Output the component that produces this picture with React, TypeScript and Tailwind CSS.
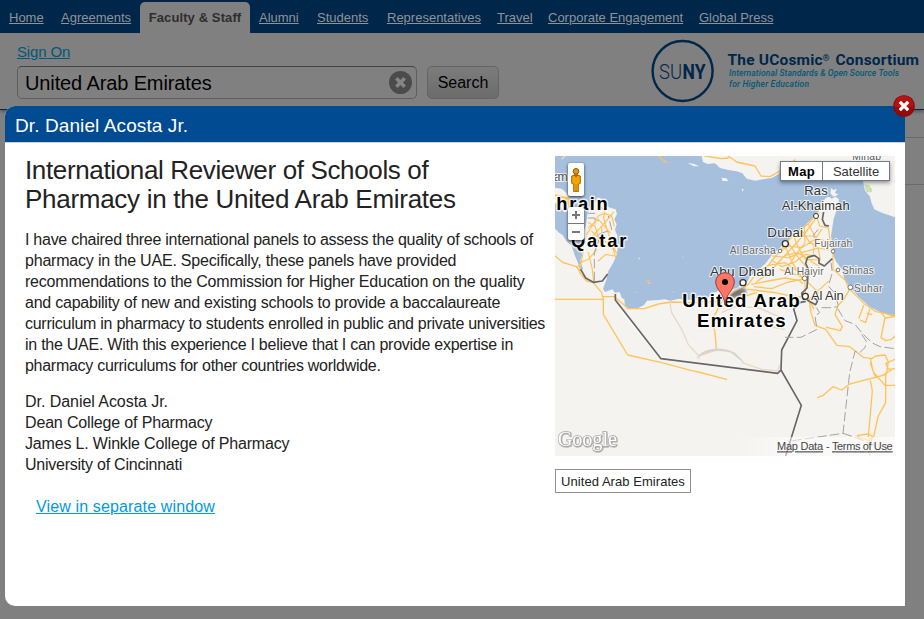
import React from "react";

const nav: [string, string][] = [
  ["Home", "w-[52px]"],
  ["Agreements", "w-[88px]"],
  ["Faculty & Staff", "w-[110px]"],
  ["Alumni", "w-[58px]"],
  ["Students", "w-[70px]"],
  ["Representatives", "w-[110px]"],
  ["Travel", "w-[51px]"],
  ["Corporate Engagement", "w-[151px]"],
  ["Global Press", "w-[93px]"],
];

const story: [string, string][] = [
  ["I have chaired three international panels to assess the quality of schools of", "tracking-[-0.265px]"],
  ["pharmacy in the UAE. Specifically, these panels have provided", "tracking-[-0.2px]"],
  ["recommendations to the Commission for Higher Education on the quality", "tracking-[-0.21px]"],
  ["and capability of new and existing schools to provide a baccalaureate", "tracking-[-0.23px]"],
  ["curriculum in pharmacy to students enrolled in public and private universities", "tracking-[-0.265px]"],
  ["in the UAE. With this experience I believe that I can provide expertise in", "tracking-[-0.255px]"],
  ["pharmacy curriculums for other countries worldwide.", "tracking-[-0.28px]"],
];

const signature: [string, string][] = [
  ["Dr. Daniel Acosta Jr.", "tracking-[-0.05px]"],
  ["Dean College of Pharmacy", "tracking-[-0.16px]"],
  ["James L. Winkle College of Pharmacy", "tracking-[-0.17px]"],
  ["University of Cincinnati", "tracking-[-0.24px]"],
];

type LabelProps = { x: number; y: number; w: number; size: number; bold?: boolean; color?: string; children: string };

function Label({ x, y, w, size, bold, color = "#333", children }: LabelProps) {
  return (
    <text
      x={x}
      y={y}
      textLength={w}
      fontSize={size}
      fontWeight={bold ? 700 : 400}
      fill={color}
      stroke="#fff"
      strokeOpacity={0.75}
      strokeWidth={bold ? 9 : 6}
      strokeLinejoin="round"
      paintOrder="stroke"
    >
      {children}
    </text>
  );
}

// Map units are thirds of a pixel.
function MapDrawing() {
  return (
    <svg viewBox="0 0 1020 900" className="block h-[300px] w-[340px]" fontFamily="Liberation Sans, Arial, sans-serif">
      <rect width="1020" height="900" fill="#a5bfdd" />
      <g fill="#f4f3f0">
        <path d="M0 218L12 230 22 236 35 256 50 270 60 300 68 318 76 345 84 340 76 312 82 296 74 278 86 255 82 238 92 210 98 170 118 140 128 124 140 130 150 148 165 155 182 160 186 175 178 190 185 205 180 222 188 240 184 262 188 280 184 300 174 322 160 345 154 372 144 398 150 408 172 400 180 410 194 408 200 425 208 430 210 450 224 458 250 456 268 446 276 434 310 432 330 430 345 434 372 428 400 432 440 425 452 432 470 412 484 408 500 398 520 402 545 396 560 386 575 380 585 362 610 342 632 322 650 298 680 270 706 246 736 222 760 198 790 170 798 146 812 126 822 122 830 128 842 122 852 130 846 160 836 188 832 215 828 240 834 268 832 292 844 318 862 342 868 370 890 400 912 424 946 454 980 470 1020 484V900H0Z" />
        <path d="M440 0L444 18 458 24 480 22 495 36 520 42 545 46 562 52 575 68 600 74 625 70 650 66 672 54 676 26 700 34 740 28 770 34 800 28 860 42 910 58 924 76 930 104 944 120 950 142 958 160 980 170 1020 184V0Z" />
        <path d="M0 95L20 98 34 110 44 132 42 160 30 170 14 150 0 140ZM398 20l20 4 14 7-16 0ZM500 65l14 2 6 8-18 0ZM560 98l6 2-4 8ZM828 96l8 6 10-4-6 12 10 6-14 6-10-10Z" />
        <path d="M278 372l6 0 2 8-6 3ZM252 304l3 4-4 4ZM382 302l3 0 0 4ZM484 340l5 3-3 5ZM355 404l2 3-3 2ZM240 408l3 0 0 4Z" />
      </g>
      <path d="M928 85l14 2 10 14-2 8-16 0Z" fill="#cfdfb0" />
      <path d="M278 376l4-6 4 6-4 8Z" fill="#f2b84b" />

      {/* roads */}
      <g fill="none" stroke="#fff" strokeWidth="7" opacity=".8">
        <path d="M194 455L318 608 668 652" />
        <path d="M734 436L716 470 724 495 678 584V642L739 748 692 900" />
      </g>
      <g fill="none" stroke="#ffc35a" strokeWidth="4" strokeLinejoin="round" strokeLinecap="round">
        <path d="M0 300L25 320 65 332 78 355 95 375 115 380 140 410 145 430H0M145 422H178L200 440 220 458H268L310 444 350 438 400 440 480 436 500 430M145 430V475L218 597 320 620 410 644 430 648 515 670" />
        <path d="M66 335L80 318 100 310 122 285 132 250 120 210 100 200M74 346C80 300 90 290 82 250M100 290L112 340 116 378M95 235L130 180 148 172 170 180 178 210M128 130L134 150 150 165 146 185 154 215 168 255 182 305M100 215L130 190 150 212 165 230M104 250L150 200 176 168M110 225L140 255 170 260 184 290M130 315L152 295 178 300M125 250L150 270 180 278M140 250V215" strokeWidth="3.5" />
        <path d="M0 118L40 128 50 150M30 128L44 150" strokeWidth="7" />
        <path d="M310 0L335 20M450 0L500 8 520 6M520 0L545 18 600 30 618 60 645 62 680 42M680 40L720 12" />
        <path d="M484 578L480 530 472 500 480 475 505 430 545 408 580 385 605 350 640 328 670 290 712 240 758 205 784 176 800 140M604 378L640 352 660 330 690 298 716 270 750 232 780 190M580 400L620 405 660 410 700 418 750 424M590 385L640 375 690 366 734 374 742 382M598 392L650 398 700 378 742 370M604 410L570 420 560 430" />
        <path d="M784 176L794 210 820 216 826 260 834 290 834 340 870 372 882 398 930 445 960 466 1020 478M640 328L690 320 720 340 748 366 752 414M652 300L700 305 740 290 790 276 820 282M670 290L700 270 740 275 780 250 800 220M690 270L712 320 742 370M716 240L730 275 752 310 796 312M740 222L762 256 790 278 796 312M650 312L680 332 720 318 750 295 780 300M700 260L726 300 760 340 748 370M725 240L770 240 810 255 826 266M760 205L780 240 775 290M690 298L730 290 790 330M754 374L790 410M762 430L820 376M675 340L720 355 748 366M748 212L750 260 720 300 690 345" strokeWidth="3.5" />
        <path d="M762 430L768 470 780 508 812 520 846 568 884 572 925 604 950 608 962 600 990 597 1000 618 994 654 962 665 946 622M762 430L776 458M884 400L866 430 848 450 840 476 862 512 856 524 815 514M1020 610L992 622 1000 640 1020 638M946 608L955 648 990 688M990 653L1010 642M994 655L960 664 900 680 884 684 860 702 834 692 805 718 788 725M946 674L952 704 940 842M992 655V740L970 780 956 842 944 848V900M990 688H1020M907 838L940 834 954 842 948 856 908 842" />
        <path d="M926 448L912 486M944 460L932 500 916 492M980 472L990 484 978 545 992 554 1010 550 1020 540M990 486L1020 482M936 472L950 476" />
      </g>
      <path d="M345 440L350 470 380 520 400 566 432 600V610M500 470L540 452 610 455 690 490M432 600L484 582 520 585M560 620L620 640 668 645 674 628M30 0L20 10M690 520L640 512 590 500" fill="none" stroke="#e6dac5" strokeWidth="4" />
      <path d="M422 608C440 580 490 566 540 590L556 606 570 622 558 614 530 592C490 576 450 588 422 608Z" fill="#d9d4cb" />

      {/* borders */}
      <g fill="none" stroke="#666" strokeWidth="5" strokeLinejoin="round">
        <path d="M77 340L92 366 115 379 142 375 158 354M181 414V432L318 608 668 652 678 642M734 436L716 458 726 494 680 582 678 642 739 748 692 900" />
        <path d="M806 168L802 190 810 208 822 210M746 432L740 412 756 396 758 370 760 340 752 322 758 304 778 298 792 308 792 322 808 330 832 308M752 436L734 440 720 456M756 432L782 446 788 434 778 426" />
      </g>
      <g fill="none" stroke="#a3a3a3" strokeWidth="3" strokeDasharray="28 10">
        <path d="M118 375V290L132 250 128 230M98 172H120M98 186H120V205M132 235L170 220 160 180" />
        <path d="M848 458L870 494 900 505 920 530 950 560 975 572 1020 578M800 455H830L848 452M784 455L794 470 780 480 786 520 738 544H690M850 448L838 410 820 390 832 350 828 320M920 535L934 556 930 575 914 590 900 586 884 650 864 832 700 856M864 832L900 844 940 860 1000 886M790 220L776 236 782 260" />
      </g>

      <Label x={-4} y={74} w={42} size={37} color="#555">am</Label>
      <Label x={892} y={12} w={86} size={31} color="#555">Minab</Label>
      <Label x={4} y={163} w={154} size={55} bold color="#000">hrain</Label>
      <Label x={48} y={274} w={166} size={55} bold color="#000">Qatar</Label>
      <Label x={748} y={118} w={70} size={39}>Ras</Label>
      <Label x={680} y={161} w={204} size={39}>Al-Khaimah</Label>
      <Label x={637} y={242} w={107} size={40}>Dubai</Label>
      <Label x={524} y={295} w={138} size={31} color="#666">Al Barsha</Label>
      <Label x={778} y={272} w={114} size={31} color="#666">Fujairah</Label>
      <Label x={465} y={360} w={194} size={41}>Abu Dhabi</Label>
      <Label x={688} y={356} w={118} size={31} color="#666">Al Haiyir</Label>
      <Label x={861} y={353} w={96} size={31} color="#666">Shinas</Label>
      <Label x={897} y={408} w={85} size={31} color="#666">Suhar</Label>
      <Label x={768} y={433} w={98} size={39}>Al Ain</Label>

      {/* town markers */}
      <g fill="#fff" stroke="#333" strokeWidth="4">
        <circle cx="691" cy="263" r="9" />
        <circle cx="564" cy="380" r="9" />
        <circle cx="751" cy="421" r="9" />
        <circle cx="783" cy="180" r="7.5" strokeWidth="3" />
      </g>
      <g fill="#fff" stroke="#777" strokeWidth="3">
        <circle cx="675" cy="285" r="5.5" />
        <circle cx="834" cy="286" r="5.5" />
        <circle cx="749" cy="367" r="7" />
        <circle cx="849" cy="342" r="5.5" />
        <circle cx="886" cy="394" r="7" />
      </g>

      {/* pin shadow */}
      <defs>
        <filter id="soft"><feGaussianBlur stdDeviation="4" /></filter>
        <linearGradient id="credit" x1="0" x2="1">
          <stop offset="0" stopColor="#fff" stopOpacity="0" />
          <stop offset=".35" stopColor="#fff" stopOpacity=".55" />
          <stop offset="1" stopColor="#fff" stopOpacity=".6" />
        </linearGradient>
      </defs>
      <path d="M514 440L530 412C545 398 575 392 574 404S550 424 528 428Z" fill="#333" opacity=".65" filter="url(#soft)" />
      <Label x={382} y={454} w={352} size={56} bold color="#000">United Arab</Label>
      <Label x={426} y={514} w={266} size={56} bold color="#000">Emirates</Label>
      <path d="M510 447C507 410 484 405 482 378A28 28 0 0 1 538 378C536 405 513 410 510 447Z" fill="#fd7567" stroke="#9d3a32" strokeWidth="3" />
      <circle cx="510" cy="378" r="9" fill="#000" />

      {/* credits */}
      <rect x="540" y="843" width="480" height="57" fill="url(#credit)" />
      <g fontSize="33" fill="#444">
        <text x="666" y="883" textLength="138" textDecoration="underline">Map Data</text>
        <text x="813" y="883">-</text>
        <text x="831" y="883" textLength="182" textDecoration="underline">Terms of Use</text>
      </g>
      <text x="8" y="870" textLength="178" fontSize="61" fontFamily="Liberation Serif, serif" fill="#fff" stroke="#a8a8a8" strokeWidth="4" paintOrder="stroke" className="drop-shadow-[2px_2px_1px_rgba(0,0,0,0.35)]">Google</text>
    </svg>
  );
}

function MapPanel() {
  return (
    <div className="relative h-[300px] w-[340px] overflow-hidden">
      <MapDrawing />
      <div className="absolute left-[13px] top-[7px] flex h-[33px] w-[16px] items-center justify-center rounded-[2px] bg-white shadow-[0_1px_3px_rgba(0,0,0,0.75)]">
        <svg viewBox="0 0 30 72" className="h-[24px] w-[10px]">
          <path d="M2 24Q15 16 28 24V46L22 48V71H8V48L2 46Z" fill="#f5a400" stroke="#a8690b" strokeWidth="3" />
          <circle cx="15" cy="10" r="8.5" fill="#e8970a" stroke="#8b5a0b" strokeWidth="3" />
          <path d="M9 20L15 28 21 20ZM15 48V70" fill="#a85f00" stroke="#b36d00" strokeWidth="2" />
        </svg>
      </div>
      <div className="absolute left-[13px] top-[51px] h-[33px] w-[16px] rounded-[2px] bg-white shadow-[0_1px_3px_rgba(0,0,0,0.75)]">
        <svg viewBox="0 0 16 33" className="h-[33px] w-[16px]">
          <path d="M4 8H12M8 4V12M4 25H12" stroke="#777" strokeWidth="2" />
          <path d="M0 16.5H16" stroke="#777" strokeWidth="1" />
        </svg>
      </div>
      <div className="absolute left-[225px] top-[5px] flex h-[20px] w-[110px] border border-[#717b87] bg-white text-[13px] leading-[19px] shadow-[0_2px_4px_rgba(0,0,0,0.4)]">
        <span className="w-[42px] border-r border-[#717b87] text-center font-bold tracking-[0.3px] text-black">Map</span>
        <span className="flex-1 text-center text-[#333]">Satellite</span>
      </div>
    </div>
  );
}

function Header() {
  return (
    <header className="h-[110px] border-b border-[#00264a] shadow-[0_2px_3px_rgba(0,0,0,0.3)]">
      <nav className="flex h-[33px] items-end bg-[#00264a] text-[13px] text-[#8f9499]">
        {nav.map(([label, width]) =>
          label === "Faculty & Staff" ? (
            <span key={label} className={`${width} h-[31px] whitespace-nowrap rounded-t-[5px] bg-[#808080] pt-[1px] text-center font-bold leading-[29px] tracking-[0.1px] text-[#2e2e2e]`}>
              {label}
            </span>
          ) : (
            <a key={label} className={`${width} h-[31px] whitespace-nowrap pl-[9px] pt-[1px] leading-[29px] underline underline-offset-1`}>
              {label}
            </a>
          )
        )}
      </nav>
      <div className="flex h-[76px] justify-between">
        <div className="pl-[17px] pt-[9px]">
          <a className="block h-[20px] text-[15px] leading-[20px] tracking-[-0.15px] text-[#005878] underline underline-offset-1">Sign On</a>
          <div className="mt-[4px] flex gap-[10px]">
            <div className="flex h-[33px] w-[400px] items-center justify-between rounded-[5px] border border-[#5e5e5e] border-t-[#444] pl-[7px] pr-[4px]">
              <span className="text-[20px] tracking-[-0.12px] text-black">United Arab Emirates</span>
              <svg viewBox="0 0 22 22" className="h-[23px] w-[23px]">
                <circle cx="11" cy="11" r="11" fill="#4b4b4b" />
                <path d="M7 7L15 15M15 7L7 15" stroke="#858585" strokeWidth="3.4" />
              </svg>
            </div>
            <button className="h-[33px] w-[72px] rounded-[5px] border border-[#646464] bg-linear-to-b from-[#7c7c7c] to-[#6c6c6c] text-[16px] text-black">Search</button>
          </div>
        </div>
        <div className="flex pt-[6px]">
          <svg viewBox="0 0 64 64" className="h-[64px] w-[64px]" fontFamily="Roboto, sans-serif" fill="#00264a">
            <circle cx="31.6" cy="32" r="30" fill="none" stroke="#00264a" strokeWidth="2.4" />
            <text x="8" y="39.5" fontSize="20.5" fontWeight="300" textLength="23" lengthAdjust="spacingAndGlyphs">SU</text>
            <text x="31.5" y="39.5" fontSize="20.5" fontWeight="700" textLength="23" lengthAdjust="spacingAndGlyphs">NY</text>
          </svg>
          <svg viewBox="0 0 209 64" className="h-[64px] w-[209px]" fontFamily="Roboto, sans-serif">
            <g fill="#00264a" fontSize="15.5" fontWeight="700">
              <text x="12.5" y="25.5" textLength="95" lengthAdjust="spacing">The UCosmic</text>
              <text x="107.5" y="22" fontSize="9">®</text>
              <text x="120.5" y="25.5" textLength="83.5" lengthAdjust="spacing">Consortium</text>
            </g>
            <g fill="#005878" fontSize="8.5" fontWeight="500" fontStyle="italic">
              <text x="14" y="37" textLength="170">International Standards &amp; Open Source Tools</text>
              <text x="14" y="48" textLength="80">for Higher Education</text>
            </g>
          </svg>
        </div>
      </div>
    </header>
  );
}

function Dialog() {
  return (
    <section className="absolute left-[5px] top-[106px] h-[500px] w-[900px] rounded-l-[10px] bg-white text-[#222]">
      <h1 className="h-[37px] rounded-tl-[10px] border-b border-[#d0d0d0] bg-[#004b91] pl-[10px] text-[19px] leading-[39px] tracking-[0.1px] text-white">Dr. Daniel Acosta Jr.</h1>
      <div className="flex pl-[20px] pt-[13px]">
        <div className="w-[530px] whitespace-nowrap">
          <h2 className="text-[26px] leading-[29px]">
            <span className="block tracking-[-0.36px]">International Reviewer of Schools of</span>
            <span className="block tracking-[-0.28px]">Pharmacy in the United Arab Emirates</span>
          </h2>
          <div className="mt-[15px] text-[16px] leading-[21px]">
            {story.map(([line, tracking]) => (
              <p key={line} className={tracking}>{line}</p>
            ))}
          </div>
          <div className="mt-[15px] text-[16px] leading-[21px]">
            {signature.map(([line, tracking]) => (
              <p key={line} className={tracking}>{line}</p>
            ))}
          </div>
          <a className="ml-[11px] mt-[21px] block text-[16px] leading-[21px] tracking-[0.14px] text-[#009adf] underline underline-offset-1">View in separate window</a>
        </div>
        <div>
          <MapPanel />
          <div className="mt-[13px] flex h-[24px] w-[136px] items-center justify-center border border-[#8e8e8e] pt-px text-[13px] tracking-[0.05px]">United Arab Emirates</div>
        </div>
      </div>
      <svg viewBox="0 0 22 22" className="absolute -top-[11px] right-[-10px] h-[22px] w-[22px]">
        <circle cx="11" cy="11" r="10.8" fill="#8c0808" />
        <circle cx="11" cy="10.2" r="9.6" fill="#b01414" />
        <path d="M2 12A9 9 0 0 0 20 12Z" fill="#950b0b" />
        <path d="M6.8 6.8L15.2 15.2M15.2 6.8L6.8 15.2" stroke="#fff" strokeWidth="3.2" />
      </svg>
    </section>
  );
}

export default function App() {
  return (
    <div className="relative h-[619px] w-[924px] overflow-hidden bg-[#808080] font-['Liberation_Sans',Arial,sans-serif]">
      <Header />
      <div className="ml-auto mt-[27px] h-[48px] w-[30px] border-y border-[#6a6a6a]" />
      <Dialog />
    </div>
  );
}
